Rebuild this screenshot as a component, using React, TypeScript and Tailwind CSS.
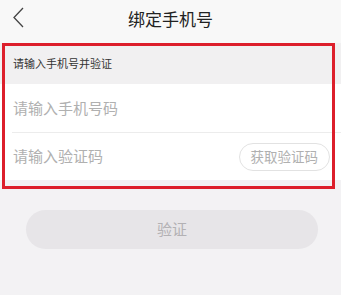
export default function App() {
  return (
    <div
      className="relative w-[341px] h-[295px] bg-[#f3f2f4] overflow-hidden"
      style={{ fontFamily: '"Noto Sans CJK SC", "Noto Sans", sans-serif' }}
    >
      {/* header */}
      <div className="h-[43px] bg-[#f8f8f8] flex items-center relative">
        <svg width="16" height="24" viewBox="0 0 16 24" className="absolute left-[11px] top-[6px]">
          <polyline points="12,2 3,11.5 12,21" fill="none" stroke="#444" strokeWidth="1.3" />
        </svg>
        <div className="flex-1 text-center text-[17px] text-[#222] leading-none -mt-[6px]">绑定手机号</div>
      </div>

      {/* section title */}
      <div className="h-[41px] bg-[#f1f0f1] flex items-center px-[13px] text-[11px] text-[#333]">
        请输入手机号并验证
      </div>

      {/* form */}
      <div className="bg-white">
        <div className="h-[48px] flex items-center px-[13px] text-[15px] text-[#b0b0b0]">请输入手机号码</div>
        <div className="ml-[12px] h-px bg-[#ececec]" />
        <div className="h-[47px] flex items-center justify-between pl-[13px] pr-[11px]">
          <span className="text-[15px] text-[#b0b0b0]">请输入验证码</span>
          <button className="h-[28px] px-[11px] rounded-full border border-[#e2e2e2] text-[13.5px] text-[#b0b0b0] bg-white">
            获取验证码
          </button>
        </div>
      </div>

      {/* verify button */}
      <div className="pl-[26px] pt-[30px]">
        <button className="w-[292px] h-[39px] rounded-full bg-[#e7e5e8] text-[15px] text-[#b3b1b4]">验证</button>
      </div>

      {/* annotation box */}
      <div className="absolute left-[2px] top-[43px] w-[333px] h-[146px] border-[3px] border-[#dd1f2b] pointer-events-none" />
    </div>
  );
}
